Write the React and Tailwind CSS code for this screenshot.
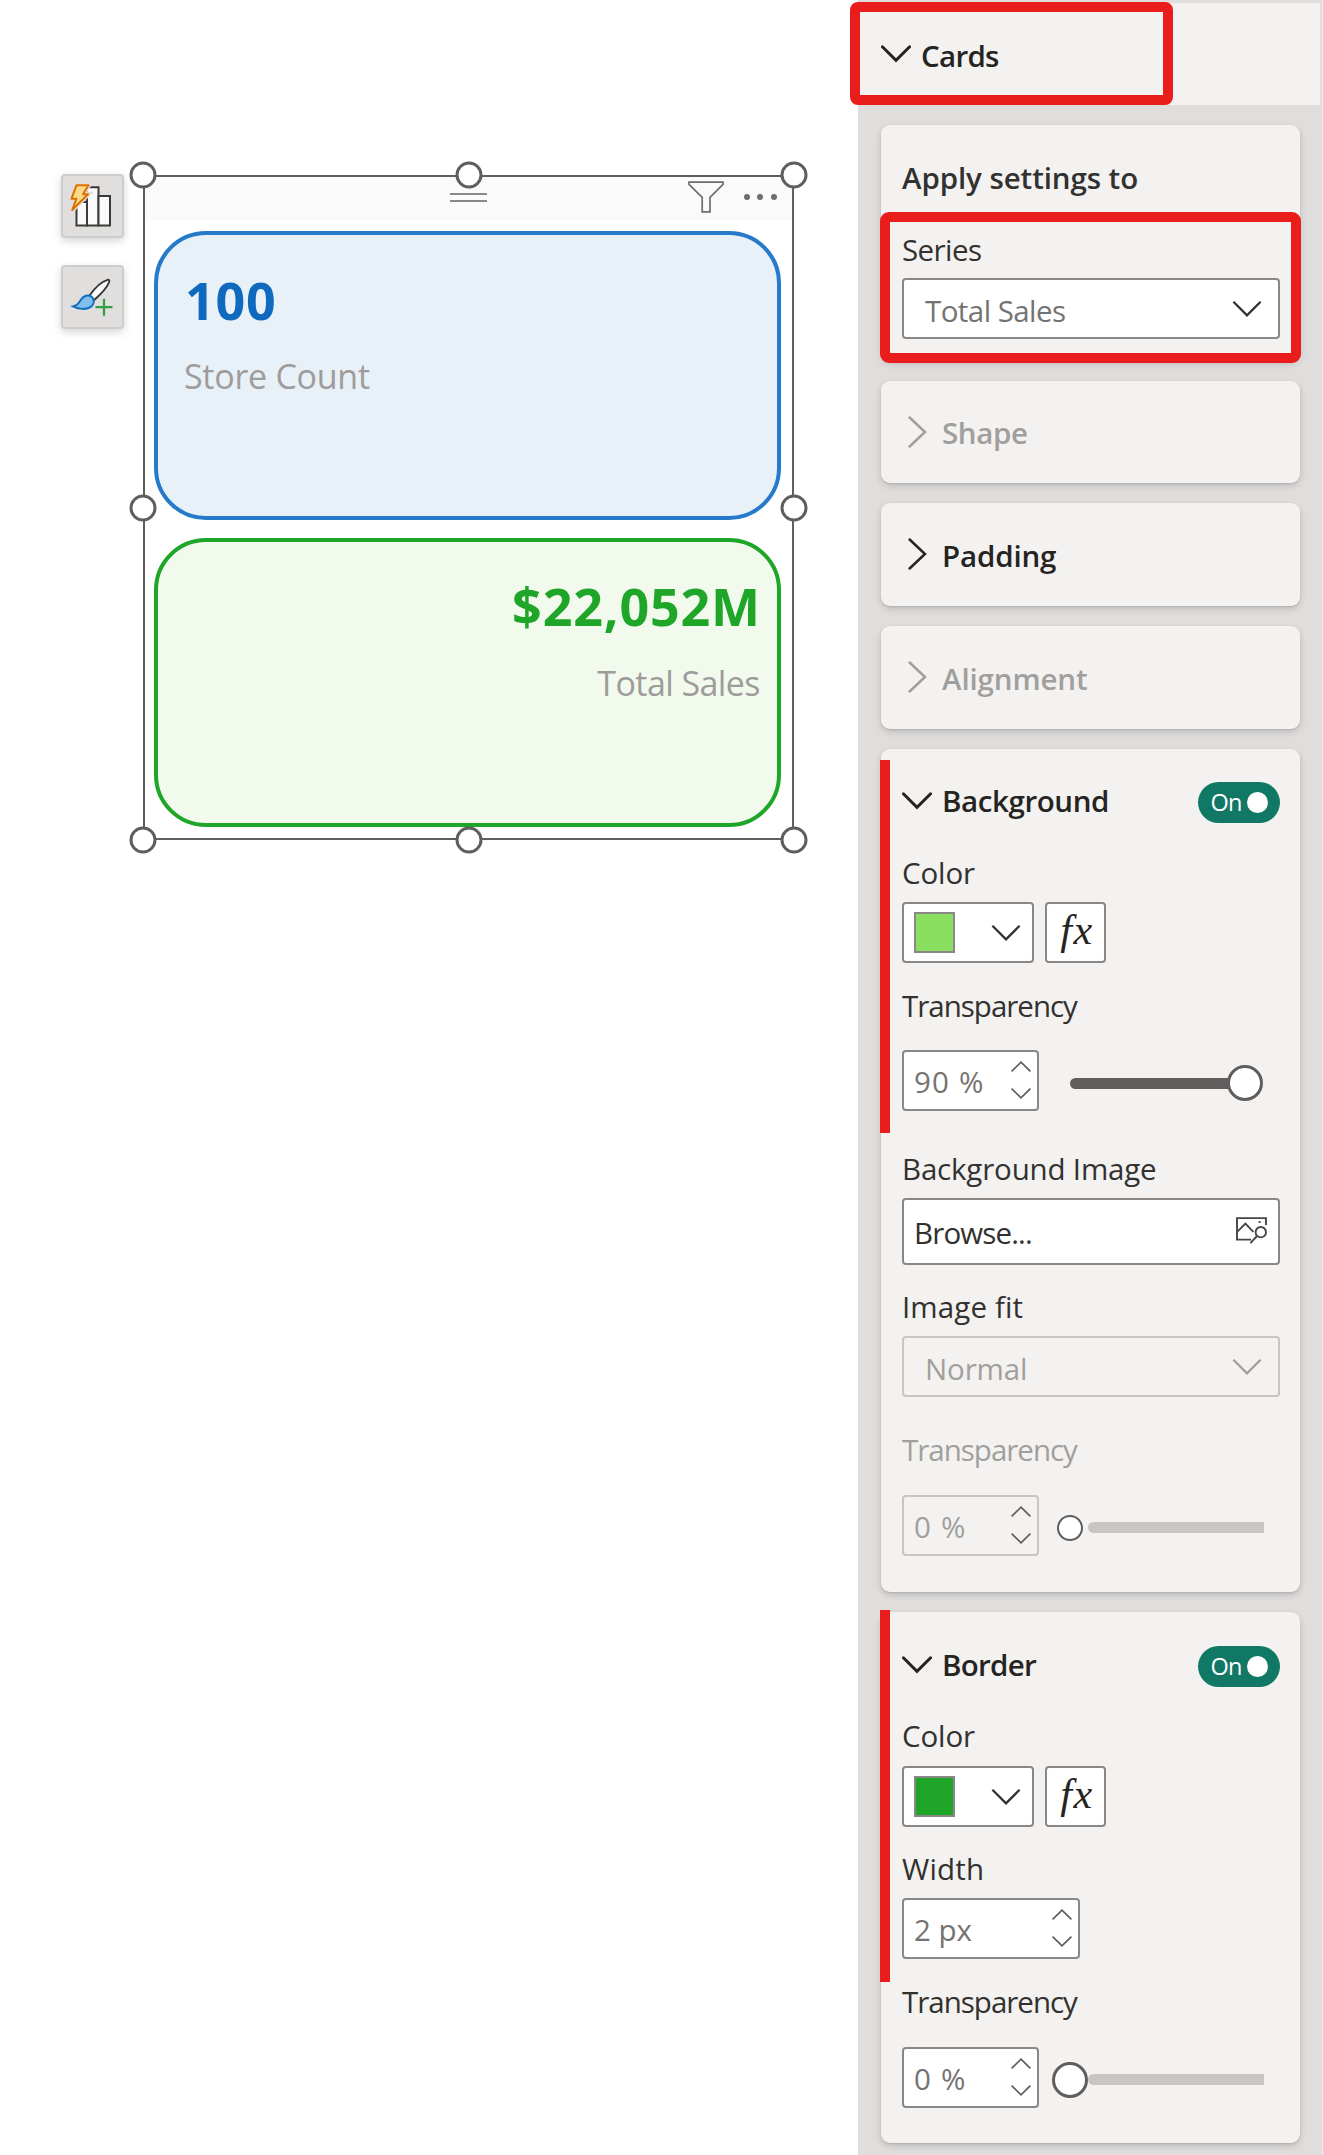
const ChevronDown = ({ color = "#252423", strong = false }) => (
  <svg width="30" height="18" viewBox="0 0 30 18" fill="none" className="shrink-0">
    <path
      d="M1.4 1.8L15 15.4L28.6 1.8"
      stroke={color}
      strokeWidth={strong ? 3 : 2.3}
      strokeLinecap={strong ? "round" : "butt"}
    />
  </svg>
);

const ChevronRight = ({ color }) => (
  <svg width="19" height="32" viewBox="0 0 19 32" fill="none" className="shrink-0">
    <path d="M1.6 1.5L17 16L1.6 30.5" stroke={color} strokeWidth="2.5" strokeLinecap="round" />
  </svg>
);

const Spinner = ({ color = "#605e5c" }) => (
  <span className="flex flex-col items-center gap-[16px] pb-[2px]">
    <svg width="20" height="11" viewBox="0 0 20 11" fill="none">
      <path d="M0.6 10.4L10 1.2L19.4 10.4" stroke={color} strokeWidth="1.7" />
    </svg>
    <svg width="20" height="11" viewBox="0 0 20 11" fill="none">
      <path d="M0.6 0.6L10 9.8L19.4 0.6" stroke={color} strokeWidth="1.7" />
    </svg>
  </span>
);

const ImageSearchIcon = () => (
  <svg width="32" height="28" viewBox="0 0 32 28" fill="none" stroke="#484644" strokeWidth="1.9" className="shrink-0">
    <path d="M30 8V1.1H1V22.6H15" />
    <path d="M1.4 14.6L9.4 6.6L17.4 14.8" />
    <circle cx="24.8" cy="15.2" r="5.2" />
    <path d="M21 19L14.4 26.2" />
    <path d="M22.6 5h2" />
  </svg>
);

const ChartBoltIcon = () => (
  <svg width="59" height="60" viewBox="2 2 59 60" fill="none">
    <path d="M15.5 28H26V51.5H15.5Z" fill="#fafafa" stroke="#3b3a39" strokeWidth="2" />
    <path d="M26 13.2H37.5V51.5H26Z" fill="#fafafa" stroke="#3b3a39" strokeWidth="2" />
    <path d="M37.5 22H49V51.5H37.5Z" fill="#fafafa" stroke="#3b3a39" strokeWidth="2" />
    <path
      d="M15.5 11.2H27.5L22 20.2H27L11.2 36L15.4 24.8H10.4Z"
      fill="#e0dfde"
      stroke="#e0dfde"
      strokeWidth="5"
    />
    <path
      d="M15.5 11.2H27.5L22 20.2H27L11.2 36L15.4 24.8H10.4Z"
      fill="#fbd98a"
      stroke="#e07000"
      strokeWidth="2"
      strokeLinejoin="round"
    />
  </svg>
);

const BrushPlusIcon = () => (
  <svg width="59" height="60" viewBox="2 2 59 60" fill="none">
    <path
      d="M28.5 30.5C34 22.5 41 16.5 46.6 14.8C48.4 14.6 48.6 15.8 48 17.4C45.6 23.2 39 30 33.2 35Z"
      fill="#fafafa"
      stroke="#3b3a39"
      strokeWidth="1.9"
    />
    <path
      d="M12 41.4C16.8 40.6 18.2 37.6 20 34.6C22.6 30.6 27 29.4 30.4 31.6C33.8 34.4 33.4 38.6 30.6 41.2C26.4 45 17.8 44.6 12 41.4Z"
      fill="#83beec"
      stroke="#0f6cbd"
      strokeWidth="1.9"
    />
    <path d="M43 33.7V50.7M34.5 42.2H51.5" stroke="#2f9e44" strokeWidth="2.2" />
  </svg>
);

const FunnelIcon = () => (
  <svg width="36" height="32" viewBox="0 0 36 32" fill="none">
    <path d="M1 1.2H35V3.4L22 16.4V30.8H14.2V16.4L1 3.4Z" stroke="#6f6d6b" strokeWidth="1.7" />
  </svg>
);

const ToolButton = ({ children }) => (
  <button className="flex h-[64px] w-[63px] items-center justify-center rounded-[4px] border-2 border-[#cecdcb] bg-[#e0dfde] shadow-[0_3px_8px_rgba(0,0,0,0.17)]">
    {children}
  </button>
);

const Handle = ({ className }) => (
  <span
    className={`absolute size-[27px] -translate-x-1/2 -translate-y-1/2 rounded-full border-[3px] border-[#605e5c] bg-white ${className}`}
  />
);

const Label = ({ children, className = "" }) => (
  <div className={`flex h-[40px] items-center whitespace-pre ${className}`}>{children}</div>
);

const FieldLabel = ({ children, className = "" }) => (
  <Label className={`pt-[2px] ${className}`}>{children}</Label>
);

const Panel = ({ children, className = "" }) => (
  <section
    className={`relative w-[419px] rounded-[9px] bg-[#f3f2f0] pr-[20px] pl-[21px] shadow-[0_3px_7px_rgba(0,0,0,0.15),0_1px_2px_rgba(0,0,0,0.10)] ${className}`}
  >
    {children}
  </section>
);

const Collapsed = ({ title, className, disabled }) => (
  <Panel className={`flex items-center ${className}`}>
    <span className="w-[40px] pb-px pl-[6px]">
      <ChevronRight color={disabled ? "#a19f9d" : "#252423"} />
    </span>
    <span className={`pt-[2px] font-semibold ${disabled ? "text-[#a19f9d]" : "text-[#252423]"}`}>{title}</span>
  </Panel>
);

const SectionHeader = ({ title, className }) => (
  <header className="flex h-[42px] items-center">
    <span className="w-[40px] pb-[3px]">
      <ChevronDown strong />
    </span>
    <span className={`grow pb-[2px] font-semibold text-[#252423] ${className}`}>{title}</span>
    <span className="flex h-[41px] w-[82px] items-center justify-between rounded-full bg-[#117865] pr-[12.5px] pl-[12.5px]">
      <span className="pt-px text-[23.5px] leading-none tracking-[-0.03em] text-white">On</span>
      <span className="size-[21px] rounded-full bg-white" />
    </span>
  </header>
);

const Select = ({ children, disabled, className = "" }) => (
  <div
    className={`flex h-[61px] items-center justify-between rounded-[4px] border-2 pr-[16px] pl-[21px] ${
      disabled ? "border-[#c8c6c4] text-[#a19f9d]" : "border-[#8a8886] bg-white text-[#757371]"
    } ${className}`}
  >
    <span className="pt-[4px]">{children}</span>
    <ChevronDown color={disabled ? "#a19f9d" : "#323130"} />
  </div>
);

const NumberBox = ({ children, disabled, className = "w-[137px]" }) => (
  <div
    className={`flex h-[61px] items-center justify-between rounded-[4px] border-2 pr-[6px] pl-[10px] whitespace-pre ${
      disabled ? "border-[#c8c6c4] text-[#a19f9d]" : "border-[#8a8886] bg-white text-[#757371]"
    } ${className}`}
  >
    <span className="pt-[3px]">{children}</span>
    <Spinner />
  </div>
);

const ColorRow = ({ swatch, className }) => (
  <div className={`flex gap-[11px] ${className}`}>
    <div className="flex h-[61px] w-[132px] items-center justify-between rounded-[4px] border-2 border-[#8a8886] bg-white pr-[11px] pl-[10px]">
      <span className={`size-[41px] border-[2.5px] border-[#8a8886] ${swatch}`} />
      <ChevronDown color="#323130" />
    </div>
    <div className="flex h-[61px] w-[61px] items-center justify-center rounded-[4px] border-2 border-[#8a8886] bg-white pb-[6px] pl-[3px] font-['Liberation_Serif',serif] text-[42px] leading-none tracking-[0.04em] text-[#252423] italic">
      fx
    </div>
  </div>
);

const EmptySlider = ({ small }) => (
  <div className={small ? "mt-[4px] ml-[18px] flex items-center" : "mt-[4px] ml-[13px] flex items-center"}>
    <span
      className={
        small
          ? "mr-[5px] size-[26px] rounded-full border-[2.5px] border-[#605e5c] bg-white"
          : "size-[36px] rounded-full border-[3px] border-[#605e5c] bg-white"
      }
    />
    <span className="h-[11px] w-[176px] rounded-l-full bg-[#c8c6c4]" />
  </div>
);

export default function App() {
  return (
    <div className="flex h-[2155px] w-[1323px] overflow-hidden bg-white font-['Open_Sans','Noto_Sans',sans-serif] text-[29.5px] leading-[40px] text-[#323130]">
      <main className="flex w-[858px] items-start pt-[174px] pl-[61px]">
        <div className="flex flex-col gap-[27px]">
          <ToolButton>
            <ChartBoltIcon />
          </ToolButton>
          <ToolButton>
            <BrushPlusIcon />
          </ToolButton>
        </div>

        <div className="relative mt-px ml-[19px] h-[665px] w-[651px]">
          <div className="h-full border-2 border-[#605e5c]">
            <div className="flex h-[43px] items-start bg-[#fafafa]">
              <div className="mt-[16px] ml-[305px] h-[9px] w-[37px] border-y-2 border-[#8a8886]" />
              <div className="mt-[4px] ml-[201px]">
                <FunnelIcon />
              </div>
              <div className="mt-[17px] ml-[19.5px] flex gap-[7.5px]">
                <span className="size-[6px] rounded-full bg-[#6f6d6b]" />
                <span className="size-[6px] rounded-full bg-[#6f6d6b]" />
                <span className="size-[6px] rounded-full bg-[#6f6d6b]" />
              </div>
            </div>
            <div className="flex flex-col gap-[18px] pt-[11px] pl-[9px]">
              <article className="h-[289px] w-[627px] rounded-[52px] border-4 border-[#257ac9] bg-[#e8f0f8] pt-[37px] pl-[26px]">
                <div className="ml-px text-[52px] leading-[56px] font-bold tracking-[0.015em] text-[#0f6abf]">100</div>
                <div className="mt-[28px] text-[34px] leading-[40px] tracking-[-0.008em] text-[#9e9c9a]">Store Count</div>
              </article>
              <article className="h-[289px] w-[627px] rounded-[52px] border-4 border-[#1fa629] bg-[#f2faee] pt-[36px] pr-[17px] text-right">
                <div className="-mr-px text-[52px] leading-[56px] font-bold tracking-[0.016em] text-[#1fa629]">$22,052M</div>
                <div className="mt-[29px] text-[34px] leading-[40px] tracking-[-0.017em] text-[#9e9c9a]">Total Sales</div>
              </article>
            </div>
          </div>
          <Handle className="top-0 left-0" />
          <Handle className="top-0 left-1/2" />
          <Handle className="top-0 left-full" />
          <Handle className="top-1/2 left-0" />
          <Handle className="top-1/2 left-full" />
          <Handle className="top-full left-0" />
          <Handle className="top-full left-1/2" />
          <Handle className="top-full left-full" />
        </div>
      </main>

      <aside className="relative flex w-[465px] flex-col border-r border-[#efeeed] bg-[#dfdedd] pt-[3px]">
        <header className="mr-[2px] flex h-[102px] items-center bg-[#f3f2f0] pl-[23px]">
          <span className="w-[40px]">
            <ChevronDown strong />
          </span>
          <span className="pt-[3px] font-semibold tracking-[-0.024em] text-[#252423]">Cards</span>
        </header>
        <div className="absolute top-[2px] left-[-8px] h-[103px] w-[323px] rounded-[8px] border-[10px] border-[#e91d1c]" />

        <div className="flex flex-col gap-[20px] pt-[20px] pl-[23px]">
          <Panel className="h-[236px] pt-[33px]">
            <Label className="font-semibold tracking-[-0.003em]">Apply settings to</Label>
            <FieldLabel className="mt-[31px] tracking-[-0.019em]">Series</FieldLabel>
            <Select className="mt-[9px] tracking-[-0.019em]">Total Sales</Select>
            <div className="absolute top-[87px] left-[-1px] h-[151px] w-[421px] rounded-[9px] border-[10px] border-[#e91d1c]" />
          </Panel>

          <Collapsed title="Shape" disabled className="h-[102px] tracking-[-0.012em]" />
          <Collapsed title="Padding" className="h-[103px] tracking-[-0.005em]" />
          <Collapsed title="Alignment" disabled className="h-[103px] tracking-[-0.004em]" />

          <Panel className="h-[843px] pt-[32px]">
            <SectionHeader title="Background" className="tracking-[-0.014em]" />
            <FieldLabel className="mt-[29px] tracking-[-0.004em]">Color</FieldLabel>
            <ColorRow swatch="bg-[#8bdf60]" className="mt-[10px]" />
            <FieldLabel className="mt-[22px] tracking-[-0.034em]">Transparency</FieldLabel>
            <div className="mt-[25px] flex items-center">
              <NumberBox className="w-[137px] tracking-[0.04em]">90 %</NumberBox>
              <div className="mt-[5px] ml-[31px] flex items-center">
                <span className="mr-[-2px] h-[11px] w-[159px] rounded-l-full bg-[#605e5c]" />
                <span className="size-[36px] rounded-full border-[3px] border-[#605e5c] bg-white" />
              </div>
            </div>
            <FieldLabel className="mt-[37px] tracking-[-0.006em]">Background Image</FieldLabel>
            <div className="mt-[10px] flex h-[67px] items-center justify-between rounded-[4px] border-2 border-[#8a8886] bg-white pr-[10px] pl-[10px]">
              <span className="pt-[3px] tracking-[-0.029em]">Browse...</span>
              <span className="pb-[2px]">
                <ImageSearchIcon />
              </span>
            </div>
            <FieldLabel className="mt-[21px] tracking-[0.004em]">Image fit</FieldLabel>
            <Select disabled className="mt-[10px] tracking-[-0.005em]">
              Normal
            </Select>
            <FieldLabel className="mt-[32px] tracking-[-0.034em] text-[#a19f9d]">Transparency</FieldLabel>
            <div className="mt-[26px] flex items-center">
              <NumberBox disabled className="w-[137px] tracking-[0.04em]">
                0 %
              </NumberBox>
              <EmptySlider small />
            </div>
            <div className="absolute top-[11px] left-[-1px] h-[373px] w-[10px] bg-[#e91d1c]" />
          </Panel>

          <Panel className="h-[531px] pt-[33px]">
            <SectionHeader title="Border" className="tracking-[-0.024em]" />
            <FieldLabel className="mt-[28px] tracking-[-0.004em]">Color</FieldLabel>
            <ColorRow swatch="bg-[#1fa629]" className="mt-[11px]" />
            <FieldLabel className="mt-[21px] tracking-[0.006em]">Width</FieldLabel>
            <NumberBox className="mt-[10px] w-[178px] tracking-[0em]">2 px</NumberBox>
            <FieldLabel className="mt-[22px] tracking-[-0.034em]">Transparency</FieldLabel>
            <div className="mt-[26px] flex items-center">
              <NumberBox className="w-[137px] tracking-[0.04em]">0 %</NumberBox>
              <EmptySlider />
            </div>
            <div className="absolute top-[-2px] left-[-1px] h-[372px] w-[10px] bg-[#e91d1c]" />
          </Panel>
        </div>
      </aside>
    </div>
  );
}
